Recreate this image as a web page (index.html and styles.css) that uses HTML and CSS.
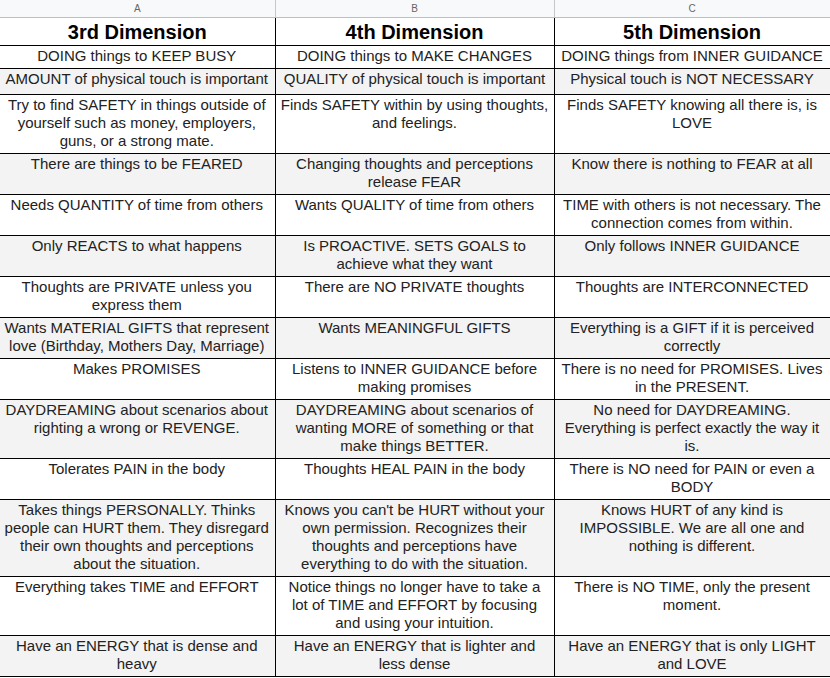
FILE: index.html
```html
<!DOCTYPE html>
<html lang="en">
<head>
<meta charset="utf-8">
<title>Dimensions</title>
<link rel="stylesheet" href="styles.css">
</head>
<body>
<table class="sheet">
  <colgroup>
    <col class="col-a">
    <col class="col-b">
    <col class="col-c">
  </colgroup>
  <thead>
    <tr class="letters">
      <th>A</th><th>B</th><th>C</th>
    </tr>
  </thead>
  <tbody>
    <tr class="title">
      <td>3rd Dimension</td><td>4th Dimension</td><td>5th Dimension</td>
    </tr>
    <tr>
      <td>DOING things to KEEP BUSY</td><td>DOING things to MAKE CHANGES</td><td>DOING things from INNER GUIDANCE</td>
    </tr>
    <tr class="alt tall">
      <td>AMOUNT of physical touch is important</td><td>QUALITY of physical touch is important</td><td>Physical touch is NOT NECESSARY</td>
    </tr>
    <tr>
      <td>Try to find SAFETY in things outside of yourself such as money, employers, guns, or a strong mate.</td><td>Finds SAFETY within by using thoughts, and feelings.</td><td>Finds SAFETY knowing all there is, is LOVE</td>
    </tr>
    <tr class="alt">
      <td>There are things to be FEARED</td><td>Changing thoughts and perceptions release FEAR</td><td>Know there is nothing to FEAR at all</td>
    </tr>
    <tr>
      <td>Needs QUANTITY of time from others</td><td>Wants QUALITY of time from others</td><td>TIME with others is not necessary. The connection comes from within.</td>
    </tr>
    <tr class="alt">
      <td>Only REACTS to what happens</td><td>Is PROACTIVE. SETS GOALS to achieve what they want</td><td>Only follows INNER GUIDANCE</td>
    </tr>
    <tr>
      <td>Thoughts are PRIVATE unless you express them</td><td>There are NO PRIVATE thoughts</td><td>Thoughts are INTERCONNECTED</td>
    </tr>
    <tr class="alt">
      <td>Wants MATERIAL GIFTS that represent love (Birthday, Mothers Day, Marriage)</td><td>Wants MEANINGFUL GIFTS</td><td>Everything is a GIFT if it is perceived correctly</td>
    </tr>
    <tr>
      <td>Makes PROMISES</td><td>Listens to INNER GUIDANCE before making promises</td><td>There is no need for PROMISES. Lives in the PRESENT.</td>
    </tr>
    <tr class="alt">
      <td>DAYDREAMING about scenarios about righting a wrong or REVENGE.</td><td>DAYDREAMING about scenarios of wanting MORE of something or that make things BETTER.</td><td>No need for DAYDREAMING. Everything is perfect exactly the way it is.</td>
    </tr>
    <tr>
      <td>Tolerates PAIN in the body</td><td>Thoughts HEAL PAIN in the body</td><td>There is NO need for PAIN or even a BODY</td>
    </tr>
    <tr class="alt">
      <td>Takes things PERSONALLY. Thinks people can HURT them. They disregard their own thoughts and perceptions about the situation.</td><td>Knows you can't be HURT without your own permission. Recognizes their thoughts and perceptions have everything to do with the situation.</td><td>Knows HURT of any kind is IMPOSSIBLE. We are all one and nothing is different.</td>
    </tr>
    <tr>
      <td>Everything takes TIME and EFFORT</td><td>Notice things no longer have to take a lot of TIME and EFFORT by focusing and using your intuition.</td><td>There is NO TIME, only the present moment.</td>
    </tr>
    <tr class="alt">
      <td>Have an ENERGY that is dense and heavy</td><td>Have an ENERGY that is lighter and less dense</td><td>Have an ENERGY that is only LIGHT and LOVE</td>
    </tr>
  </tbody>
</table>
</body>
</html>
```

FILE: styles.css
```css
html, body {
  margin: 0;
  padding: 0;
  background: #ffffff;
}

.sheet {
  border-collapse: collapse;
  table-layout: fixed;
  width: 830px;
  font-family: "Liberation Sans", Arial, sans-serif;
  color: #222222;
}

.col-a { width: 275px; }
.col-b { width: 279px; }
.col-c { width: 276px; }

.letters th {
  height: 17px;
  padding: 0;
  background: #f8f9fa;
  border-left: 1px solid #c7c7c7;
  border-right: 1px solid #c7c7c7;
  border-bottom: 1px solid #c0c0c0;
  font-weight: normal;
  font-size: 10px;
  color: #666666;
  text-align: center;
  vertical-align: middle;
}

.letters th:first-child {
  border-left: none;
}

.sheet td {
  border: 1px solid #000000;
  padding: 1px 4px 3px;
  font-size: 15px;
  line-height: 18px;
  text-align: center;
  vertical-align: top;
  overflow-wrap: break-word;
}

.sheet td:first-child {
  border-left: none;
  padding-left: 3px;
}

.sheet tbody tr:first-child td {
  border-top: none;
}

.title td {
  height: 23px;
  padding: 2px 3px 1px;
  font-size: 20px;
  line-height: 24px;
  font-weight: bold;
  color: #000000;
  vertical-align: bottom;
}

.alt td {
  background: #f3f3f3;
}

.tall td {
  height: 21px;
}
```
